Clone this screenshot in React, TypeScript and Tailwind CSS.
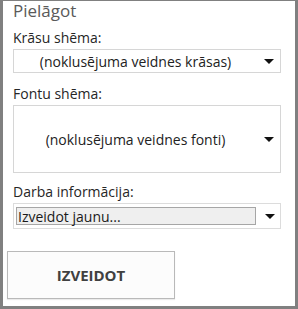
// Customize pane with three dropdowns and a create button
const font = { fontFamily: '"Open Sans", "Noto Sans", sans-serif' }

function Arrow() {
  return (
    <svg width="10" height="5" viewBox="0 0 10 5" className="shrink-0">
      <path d="M0 0h10L5 5z" fill="#111" />
    </svg>
  )
}

function Select({ label, height }: { label: string; height: string }) {
  return (
    <div className={`ml-[10px] mr-[14px] flex items-center border border-[#d6d6d6] bg-white pr-[6px] ${height}`}>
      <span className="flex-1 text-center text-[14px] text-[#222] pr-[7px]">{label}</span>
      <Arrow />
    </div>
  )
}

export default function App() {
  return (
    <div
      style={font}
      className="w-[298px] h-[309px] bg-white border-[#808080] border-l-[3px] border-r-[3px] border-b-[3px] border-t flex flex-col"
    >
      <h2 className="ml-[10px] text-[17px] leading-[20px] text-[#5a5a5a]">Pielāgot</h2>
      <p className="ml-[10px] mt-[8px] text-[14px] leading-[18px] text-[#262626]">Krāsu shēma:</p>
      <div className="mt-[2px]">
        <Select label="(noklusējuma veidnes krāsas)" height="h-[24px]" />
      </div>
      <p className="ml-[10px] mt-[12px] text-[14px] leading-[18px] text-[#262626]">Fontu shēma:</p>
      <div className="mt-[2px]">
        <Select label="(noklusējuma veidnes fonti)" height="h-[68px]" />
      </div>
      <p className="ml-[10px] mt-[10px] text-[14px] leading-[18px] text-[#262626]">Darba informācija:</p>
      <div className="ml-[10px] mr-[14px] mt-[2px] h-[26px] flex items-center border border-[#dcdcdc] bg-white pl-[2px] pr-[5px] gap-[9px]">
        <div className="flex-1 h-[18px] border border-[#a6a6a6] bg-[#efefef] flex items-center pl-[1px] text-[14px] text-[#1a1a1a]">
          Izveidot jaunu...
        </div>
        <Arrow />
      </div>
      <button className="ml-[4px] mt-[22px] w-[168px] h-[48px] border border-[#b9b9b9] bg-[#fcfcfc] shadow-[0_1px_1px_rgba(0,0,0,0.08)] text-[15px] font-bold text-[#404040]">
        IZVEIDOT
      </button>
    </div>
  )
}
